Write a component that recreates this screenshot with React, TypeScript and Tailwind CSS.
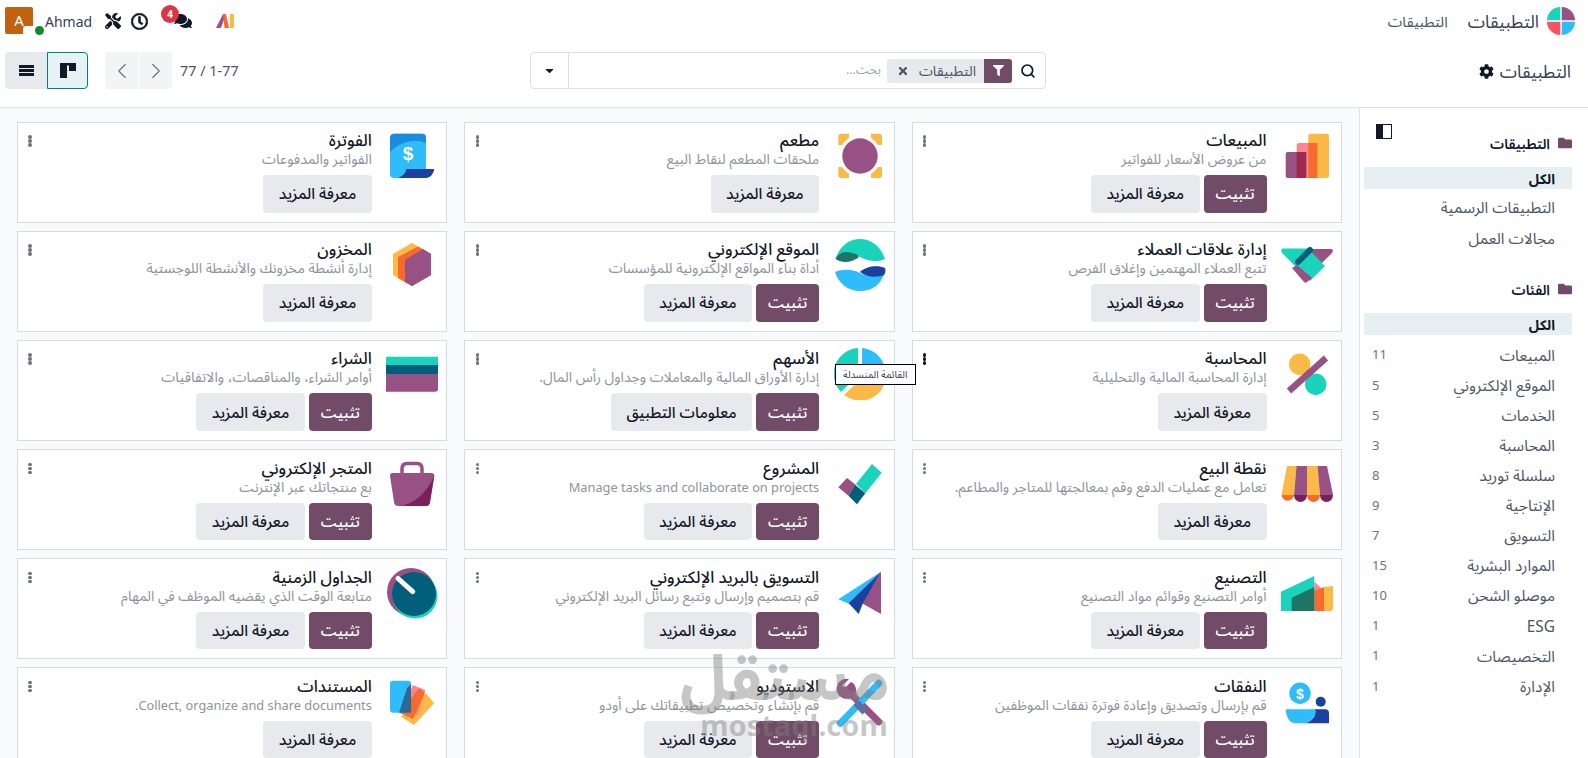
import type { ReactNode } from "react";
import { ChevronLeft, ChevronRight, Search } from "lucide-react";
import { FaCaretDown, FaCog, FaComments, FaFilter, FaFolder, FaRegClock, FaTimes, FaTools } from "react-icons/fa";

const PURPLE = "#985184";
const YELLOW = "#fbb945";
const TEAL = "#1ad3bb";
const DEEP = "#005e7a";
const BLUE = "#2ebcfa";
const NAVY = "#1a419d";
const ORANGE = "#f76a2b";
const PINK = "#fc868d";

/* ── App logos, all in a 52x52 box ── */

function Logo({ children }: { children: ReactNode }) {
  return (
    <svg viewBox="0 0 52 52" className="w-[52px] h-[52px] shrink-0">
      {children}
    </svg>
  );
}

const SalesLogo = () => (
  <Logo>
    <rect x={27.3} y={3.7} width={20.7} height={44.3} rx={2} fill={YELLOW} />
    <rect x={15.7} y={13} width={20.5} height={35} rx={2} fill={PINK} />
    <rect x={27.3} y={13} width={8.9} height={35} fill={ORANGE} />
    <rect x={4.7} y={22} width={20.5} height={26} rx={2} fill={PURPLE} />
    <rect x={15.7} y={22} width={9.5} height={26} fill="#9c2b4f" />
  </Logo>
);

const RestaurantLogo = () => (
  <Logo>
    <rect x={4.3} y={3.7} width={43.7} height={44.3} rx={3} fill={YELLOW} />
    <rect x={15} y={2} width={22} height={48} fill="#fff" />
    <rect x={2} y={15} width={48} height={22} fill="#fff" />
    <circle cx={26} cy={26} r={21} fill="#fff" />
    <circle cx={26} cy={26} r={17.7} fill={PURPLE} />
  </Logo>
);

const InvoiceLogo = () => (
  <Logo>
    <rect x={4} y={3.7} width={36} height={44.3} rx={4} fill={BLUE} />
    <path d="M8 3.7H36a4 4 0 0 1 4 4V13C28 8 14 12 4 22V8a4 4 0 0 1 4-4.3Z" fill="#1a8ce0" />
    <path d="M12 48C17 46 20 43 20 39H48.3C47.5 44 44 48 40 48Z" fill={NAVY} />
    <text x={22} y={30} textAnchor="middle" fontSize={19} fontWeight={700} fill="#fff" className="font-['Liberation_Sans',sans-serif]">$</text>
  </Logo>
);

const CrmLogo = () => (
  <Logo>
    <path d="M25 10H50C52 10 52.5 12 51 14L40 25Z" fill={PURPLE} />
    <path d="M2 9.5H27L44 27L29 42L1 14C-0.5 12 0.5 9.5 2 9.5Z" fill={TEAL} />
    <path d="M11 29L16 26L31 39L26 43C25 44 24 44 23 43Z" fill={PURPLE} />
    <path d="M17 23L29 11" stroke={DEEP} strokeWidth={6} strokeLinecap="round" />
  </Logo>
);

const WebsiteLogo = () => (
  <Logo>
    <path d="M1.5 20C6 6 16 0 26 0C38 0 47 8 51 20C42 24 34 22 26 18C18 14 8 14 1.5 20Z" fill={TEAL} />
    <path d="M1.5 20C5 13 12 12 18 14C24 15 27 18 22 20C16 24 7 24 1.5 20Z" fill="#1f7565" />
    <path d="M1 33C8 30 18 30 26 34C34 38 44 38 51 31C48 46 38 52 26 52C14 52 4 44 1 33Z" fill={BLUE} />
    <path d="M26 33C32 27 44 26 51 29C52 31 51 35 50 36C42 39 32 38 26 33Z" fill={NAVY} />
  </Logo>
);

const InventoryLogo = () => (
  <Logo>
    <polygon points="26,4 45,15 45,36 26,47 7,36 7,15" fill={YELLOW} />
    <polygon points="32,7.5 45,15 45,36 26,47 12,39 12,18" fill={ORANGE} />
    <polygon points="37,10 45,15 45,36 26,47 19,43 19,21" fill={PURPLE} />
  </Logo>
);

const AccountingLogo = () => (
  <Logo>
    <circle cx={18.7} cy={16.3} r={10.7} fill={YELLOW} />
    <circle cx={34.7} cy={36.3} r={10.7} fill={TEAL} />
    <path d="M8 43L45 10" stroke={PURPLE} strokeWidth={6.5} />
  </Logo>
);

const StockLogo = () => (
  <Logo>
    <path d="M24 0A26 26 0 0 0 7 44L24 27Z" fill={TEAL} />
    <path d="M28 0A26 26 0 0 1 51 20H28Z" fill={BLUE} />
    <path d="M10 47L28 30H52A26 26 0 0 1 10 47Z" fill={YELLOW} />
  </Logo>
);

const PurchaseLogo = () => (
  <Logo>
    <path d="M1 8.7H52V17H0V10Q0 8.7 1 8.7Z" fill={TEAL} />
    <rect x={0} y={17} width={52} height={9} fill={DEEP} />
    <path d="M0 26H52V41Q52 43.7 49 43.7H0Z" fill={PURPLE} />
  </Logo>
);

const PosLogo = () => (
  <Logo>
    <polygon points="6,8 15.5,8 13,37 0.5,37" fill={YELLOW} />
    <polygon points="15.5,8 26,8 26,37 13,37" fill={PURPLE} />
    <polygon points="26,8 36.5,8 39,37 26,37" fill={YELLOW} />
    <polygon points="36.5,8 46,8 52,37 39,37" fill={PURPLE} />
    <path d="M0.5 37H13A6.3 6.5 0 0 1 0.5 37Z" fill={ORANGE} />
    <path d="M13 37H26A6.5 7 0 0 1 13 37Z" fill="#7a1f5c" />
    <path d="M26 37H39A6.5 7 0 0 1 26 37Z" fill={ORANGE} />
    <path d="M39 37H52A6.5 7 0 0 1 39 37Z" fill="#7a1f5c" />
  </Logo>
);

const ProjectLogo = () => (
  <Logo>
    <polygon points="38,6 47.7,14.7 31.3,35.3 22,26" fill={TEAL} />
    <polygon points="13,20 22,27 14.7,38 4.3,29.3" fill={PURPLE} />
    <polygon points="21.3,27 31.3,35.3 23,46.3 14.7,38" fill={DEEP} />
  </Logo>
);

const ShopLogo = () => (
  <Logo>
    <path d="M16 16V11Q16 5.5 21 5.5H31Q36 5.5 36 11V16" fill="none" stroke={PURPLE} strokeWidth={3.5} />
    <path d="M7 15H45Q48.5 15 48.3 18L44 44Q43.5 48 40 48H12Q8.5 48 8 44L4 18Q3.8 15 7 15Z" fill={PURPLE} />
    <path d="M48.3 17L44 44Q43.5 48 40 48H15C28 46 42 34 48.3 17Z" fill="#7a1f5c" />
  </Logo>
);

const MrpLogo = () => (
  <Logo>
    <polygon points="43,20 52,19 52,42 50,44 43,44" fill={YELLOW} />
    <polygon points="33.3,14.5 43,24 43,44 33.3,44" fill={PINK} />
    <polygon points="33.3,24 43,20 43,44 33.3,44" fill={ORANGE} />
    <path d="M0 24.7L33.3 9V44H0Z" fill={TEAL} />
    <path d="M10.7 30.7L33.3 20V44H10.7Z" fill="#1f7565" />
  </Logo>
);

const MailingLogo = () => (
  <Logo>
    <polygon points="47,4.7 47,47 28,36.3" fill={PURPLE} />
    <polygon points="47,4.7 4.3,32.3 18,38" fill={BLUE} />
    <polygon points="47,4.7 14.7,36.3 24.7,47 29,36" fill={NAVY} />
  </Logo>
);

const TimesheetLogo = () => (
  <Logo>
    <circle cx={25} cy={25} r={24} fill={PURPLE} />
    <circle cx={29} cy={29} r={22.5} fill={TEAL} />
    <circle cx={28} cy={27} r={22} fill={DEEP} />
    <path d="M12 11.5L26.7 24.7" stroke="#fff" strokeWidth={5} strokeLinecap="round" />
  </Logo>
);

const ExpensesLogo = () => (
  <Logo>
    <circle cx={19} cy={17.3} r={10.7} fill={BLUE} />
    <text x={19} y={22.5} textAnchor="middle" fontSize={14} fontWeight={700} fill="#fff" className="font-['Liberation_Sans',sans-serif]">$</text>
    <circle cx={39.7} cy={25.7} r={5} fill={NAVY} />
    <path d="M34 33.3H44a4 4 0 0 1 4 4V47.3H22C30 47.3 36 40 34 33.3Z" fill={NAVY} />
    <path d="M4.7 33.3H34C36 40 30 47.3 22 47.3H14C8 47 5 40 4.7 33.3Z" fill={BLUE} />
  </Logo>
);

const StudioLogo = () => (
  <Logo>
    <path d="M16 17L44.7 45.7" stroke={PURPLE} strokeWidth={7} strokeLinecap="round" />
    <path d="M16 3A10 10 0 0 0 8 21C11 23 15 23.5 18 22L23 17C24 11 21 7 18 6L13 11L9 10Z" fill={PURPLE} transform="translate(-1,0)" />
    <path d="M44.7 7.3L6.3 47.3" stroke={BLUE} strokeWidth={7} strokeLinecap="round" />
    <path d="M22 26.5L31 36" stroke="#5c6f9f" strokeWidth={7} />
  </Logo>
);

const DocumentsLogo = () => (
  <Logo>
    <polygon points="28,49 48,27.3 40,17 15,40.7" fill={YELLOW} />
    <polygon points="26.7,9 39.3,14 31.6,39 16.7,37" fill={PINK} />
    <polygon points="33,12 38.7,17 27,43 14,37" fill={ORANGE} />
    <rect x={4} y={4.7} width={21} height={32} rx={3} fill={BLUE} />
    <polygon points="25,8 25,36.7 13,36.7 21,12" fill="#2a6a94" />
  </Logo>
);

/* ── Data, in page order (first item is the right hand column) ── */

interface AppCard {
  title: string;
  desc: string;
  logo: ReactNode;
  install?: boolean;
  more?: string;
  active?: boolean;
}

const APPS: AppCard[] = [
  { title: "المبيعات", desc: "من عروض الأسعار للفواتير", logo: <SalesLogo />, install: true },
  { title: "مطعم", desc: "ملحقات المطعم لنقاط البيع", logo: <RestaurantLogo /> },
  { title: "الفوترة", desc: "الفواتير والمدفوعات", logo: <InvoiceLogo /> },
  { title: "إدارة علاقات العملاء", desc: "تتبع العملاء المهتمين وإغلاق الفرص", logo: <CrmLogo />, install: true },
  { title: "الموقع الإلكتروني", desc: "أداة بناء المواقع الإلكترونية للمؤسسات", logo: <WebsiteLogo />, install: true },
  { title: "المخزون", desc: "إدارة أنشطة مخزونك والأنشطة اللوجستية", logo: <InventoryLogo /> },
  { title: "المحاسبة", desc: "إدارة المحاسبة المالية والتحليلية", logo: <AccountingLogo />, active: true },
  { title: "الأسهم", desc: "إدارة الأوراق المالية والمعاملات وجداول رأس المال.", logo: <StockLogo />, install: true, more: "معلومات التطبيق" },
  { title: "الشراء", desc: "أوامر الشراء، والمناقصات، والاتفاقيات", logo: <PurchaseLogo />, install: true },
  { title: "نقطة البيع", desc: "تعامل مع عمليات الدفع وقم بمعالجتها للمتاجر والمطاعم.", logo: <PosLogo /> },
  { title: "المشروع", desc: "Manage tasks and collaborate on projects", logo: <ProjectLogo />, install: true },
  { title: "المتجر الإلكتروني", desc: "بع منتجاتك عبر الإنترنت", logo: <ShopLogo />, install: true },
  { title: "التصنيع", desc: "أوامر التصنيع وقوائم مواد التصنيع", logo: <MrpLogo />, install: true },
  { title: "التسويق بالبريد الإلكتروني", desc: "قم بتصميم وإرسال وتتبع رسائل البريد الإلكتروني", logo: <MailingLogo />, install: true },
  { title: "الجداول الزمنية", desc: "متابعة الوقت الذي يقضيه الموظف في المهام", logo: <TimesheetLogo />, install: true },
  { title: "النفقات", desc: "قم بإرسال وتصديق وإعادة فوترة نفقات الموظفين", logo: <ExpensesLogo />, install: true },
  { title: "الاستوديو", desc: "قم بإنشاء وتخصيص تطبيقاتك على أودو", logo: <StudioLogo />, install: true },
  { title: "المستندات", desc: "Collect, organize and share documents.", logo: <DocumentsLogo /> },
];

const CATEGORIES: [string, number][] = [
  ["المبيعات", 11],
  ["الموقع الإلكتروني", 5],
  ["الخدمات", 5],
  ["المحاسبة", 3],
  ["سلسلة توريد", 8],
  ["الإنتاجية", 9],
  ["التسويق", 7],
  ["الموارد البشرية", 15],
  ["موصلو الشحن", 10],
  ["ESG", 1],
  ["التخصيصات", 1],
  ["الإدارة", 1],
];

/* ── Pieces ── */

function Dots({ dark }: { dark?: boolean }) {
  const color = dark ? "bg-[#111827]" : "bg-[#6b7280]";
  return (
    <div className="flex flex-col gap-[0.5px] w-[4px] items-center mt-[5px] ml-[1px] shrink-0">
      <span className={`w-[3.5px] h-[3.5px] rounded-full ${color}`} />
      <span className={`w-[3.5px] h-[3.5px] rounded-full ${color}`} />
      <span className={`w-[3.5px] h-[3.5px] rounded-full ${color}`} />
    </div>
  );
}

function Card({ app }: { app: AppCard }) {
  const descSize = /^[A-Za-z]/.test(app.desc) ? "text-[12.8px]" : "text-[14.1px]";
  return (
    <div className="relative flex h-[101.2px] bg-white border border-[#d8dadd] pt-[7.5px] pr-[8px] pl-[9px]">
      {app.logo}
      <div className="flex-1 mr-[14.5px] min-w-0">
        <div className="text-[16.4px] leading-[20px] font-medium text-[#111827]">{app.title}</div>
        <div className={`${descSize} leading-[18px] text-[#8f929c]`}>{app.desc}</div>
        <div className="flex gap-[4px] mt-[7px]">
          {app.install && (
            <button className="h-[37.5px] w-[63px] rounded-[4px] bg-[#714b67] text-white text-[15.4px] font-medium">تثبيت</button>
          )}
          <button className="h-[37.5px] px-[15.5px] rounded-[4px] bg-[#e7e9ed] text-[#111827] text-[15.4px] font-medium">
            {app.more ?? "معرفة المزيد"}
          </button>
        </div>
      </div>
      <Dots dark={app.active} />
      {app.active && (
        <div className="absolute z-10 left-[-78px] top-[23px] w-[81px] h-[21px] bg-white border border-black flex items-center justify-center text-[10px] text-[#374151]">
          القائمة المنسدلة
        </div>
      )}
    </div>
  );
}

function SideRow({ label, count }: { label: string; count?: number }) {
  return (
    <div className="h-[30.1px] flex items-center justify-between pr-[17px] pl-[8px] text-[15.4px] text-[#4b5563]">
      <span>{label}</span>
      {count !== undefined && <span className="text-[13px] text-[#6b7280]">{count}</span>}
    </div>
  );
}

function SideTitle({ label }: { label: string }) {
  return (
    <div className="h-[22px] flex items-center gap-[8px] text-[14px] font-semibold text-[#111827]">
      <FaFolder className="w-[14px] h-[14px] text-[#714b67]" />
      {label}
    </div>
  );
}

function SideActive() {
  return (
    <div className="h-[22px] mt-[13px] bg-[#e6eff1] flex items-center pr-[17px] text-[14px] font-bold text-[#111827]">الكل</div>
  );
}

function TopBar() {
  return (
    <div className="h-[42px] flex items-center justify-between pr-[13px] pl-[5px]">
      <div className="flex items-center">
        <svg viewBox="0 0 28 28" className="w-[28px] h-[28px]">
          <path d="M13.3 0V13.3H0A13.3 13.3 0 0 1 13.3 0Z" fill="#1ad3bb" />
          <path d="M14.7 0A13.3 13.3 0 0 1 28 13.3H14.7Z" fill="#985184" />
          <path d="M0 14.7H13.3V28A13.3 13.3 0 0 1 0 14.7Z" fill="#f7545f" />
          <path d="M14.7 14.7H28A13.3 13.3 0 0 1 14.7 28Z" fill="#2ebcfa" />
        </svg>
        <span className="mr-[8px] text-[17.5px] text-[#374151]">التطبيقات</span>
        <span className="mr-[20px] text-[14.7px] text-[#4b5563]">التطبيقات</span>
      </div>
      <div className="flex items-center">
        <svg viewBox="0 0 18 14" className="w-[18px] h-[14px]">
          <polygon points="0,14 7,0 10,0 5,14" fill="#985184" />
          <polygon points="7,0 10,0 13,14 8.5,14" fill="#f76a2b" />
          <rect x={14} y={0} width={4} height={14} fill="#fbb945" />
        </svg>
        <div className="relative mr-[24px]">
          <FaComments className="w-[18px] h-[16px] text-[#111827]" />
          <span className="absolute top-[-8px] right-[13px] w-[18px] h-[18px] rounded-full bg-[#dc3545] text-white text-[10px] font-bold flex items-center justify-center">4</span>
        </div>
        <FaRegClock className="mr-[26px] w-[17px] h-[17px] text-[#111827] stroke-[20]" />
        <FaTools className="mr-[10px] w-[16px] h-[16px] text-[#111827]" />
        <span className="mr-[13px] text-[14px] text-[#374151]" dir="ltr">Ahmad</span>
        <div className="relative mr-[12px] mb-[2px] w-[28px] h-[27px] rounded-[2px] bg-[#c2610f] flex items-center justify-center text-white text-[15px]" dir="ltr">
          A
          <span className="absolute bottom-[-1px] right-[-1px] w-[11px] h-[9px] bg-white rounded-tl-[3px]" />
          <span className="absolute left-[30px] bottom-[-1px] w-[9px] h-[9px] rounded-full bg-[#108a2e]" />
        </div>
      </div>
    </div>
  );
}

function ToolBar() {
  return (
    <div className="h-[66px] border-b border-[#dee2e6] grid grid-cols-[542px_516.5px_1fr] pt-[10px]">
      <div className="flex h-[39px] items-center pr-[17px] gap-[6px]">
        <span className="text-[17.5px] text-[#374151]">التطبيقات</span>
        <FaCog className="w-[15px] h-[15px] text-[#111827]" />
      </div>
      <div className="flex h-[37px] border border-[#dee0e3] rounded-[4px]">
        <div className="flex-1 flex items-center pr-[9px]">
          <Search className="w-[16px] h-[16px] text-[#111827]" strokeWidth={2.6} />
          <div className="flex items-center h-[24px] mr-[8px] bg-[#e7e9ed] rounded-[3px] overflow-hidden">
            <span className="w-[28px] h-full bg-[#714b67] flex items-center justify-center">
              <FaFilter className="w-[11px] h-[11px] text-white" />
            </span>
            <span className="mr-[8px] text-[14px] text-[#4b5563]">التطبيقات</span>
            <FaTimes className="mx-[10px] w-[12px] h-[12px] text-[#4b5563]" />
          </div>
          <span className="mr-[6px] text-[12.5px] text-[#9ca3af]">بحث...</span>
        </div>
        <div className="w-[38px] border-r border-[#dee0e3] flex items-center justify-center">
          <FaCaretDown className="w-[13px] h-[13px] text-[#111827]" />
        </div>
      </div>
      <div className="flex h-[37px] items-center justify-end pl-[5px]">
        <span className="text-[14.4px] text-[#4b5563]">1-77 / 77</span>
        <div className="flex mr-[8px] h-[37px]" dir="ltr">
          <span className="w-[33px] bg-[#f3f4f6] rounded-l-[4px] flex items-center justify-center">
            <ChevronLeft className="w-[26px] h-[26px] text-[#6b7280]" strokeWidth={1} />
          </span>
          <span className="w-[33px] ml-[1px] bg-[#f3f4f6] rounded-r-[4px] flex items-center justify-center">
            <ChevronRight className="w-[26px] h-[26px] text-[#6b7280]" strokeWidth={1} />
          </span>
        </div>
        <div className="flex mr-[17px] h-[37px]" dir="ltr">
          <span className="w-[42px] bg-[#e7e9ed] rounded-l-[4px] flex flex-col items-center justify-center gap-[1px]">
            <span className="w-[15px] h-[3px] bg-[#111827]" />
            <span className="w-[15px] h-[3px] bg-[#111827]" />
            <span className="w-[15px] h-[3px] bg-[#111827]" />
          </span>
          <span className="w-[41px] bg-[#e6f2f3] border border-[#017e84] rounded-r-[4px] flex items-center justify-center">
            <svg viewBox="0 0 16 15" className="w-[16px] h-[15px]">
              <rect x={0} y={0} width={16} height={2.5} fill="#111827" />
              <rect x={0} y={0} width={7} height={15} fill="#111827" />
              <rect x={9} y={0} width={7} height={8} fill="#111827" />
            </svg>
          </span>
        </div>
      </div>
    </div>
  );
}

function SidePanel() {
  return (
    <aside className="relative w-[229px] shrink-0 border-l border-[#dee2e6] bg-white pt-[24px] pr-[16px] pl-[4px]">
      <svg viewBox="0 0 16 15" className="absolute top-[16px] left-[16px] w-[16px] h-[15px]">
        <rect x={0.5} y={0.5} width={15} height={14} fill="#fff" stroke="#111827" />
        <rect x={0} y={0} width={7} height={15} fill="#111827" />
      </svg>
      <SideTitle label="التطبيقات" />
      <SideActive />
      <div className="mt-[4px]">
        <SideRow label="التطبيقات الرسمية" />
        <SideRow label="مجالات العمل" />
      </div>
      <div className="mt-[25px]">
        <SideTitle label="الفئات" />
      </div>
      <SideActive />
      <div className="mt-[5px]">
        {CATEGORIES.map(([label, count]) => (
          <SideRow key={label} label={label} count={count} />
        ))}
      </div>
    </aside>
  );
}

export default function App() {
  return (
    <div dir="rtl" className="h-[758px] overflow-hidden flex flex-col bg-white font-['Noto_Sans','Noto_Sans_Arabic','DejaVu_Sans',sans-serif]">
      <TopBar />
      <ToolBar />
      <div className="flex flex-1 min-h-0">
        <SidePanel />
        <main className="relative flex-1 min-w-0 overflow-hidden bg-[#f9fafb] pt-[13.5px] pr-[17px] pl-[17px]">
          <div className="grid grid-cols-3 gap-x-[17px] gap-y-[8px]">
            {APPS.map((app) => (
              <Card key={app.title} app={app} />
            ))}
          </div>
          {/* mostaql watermark over the bottom of the page */}
          <div className="absolute left-[648px] top-[538px] w-[300px] text-center pointer-events-none text-[#80808073] font-bold" dir="ltr">
            <div className="text-[63px] leading-[60px] pr-[26px]">مستقل</div>
            <div className="text-[29px] leading-[30px] mt-[4px] pr-[8px]">mostaql.com</div>
          </div>
        </main>
      </div>
    </div>
  );
}
